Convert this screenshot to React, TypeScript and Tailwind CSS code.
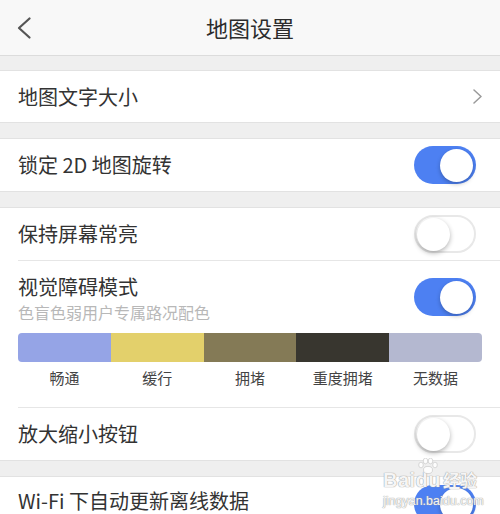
const FONT = "font-['PingFang_SC','Noto_Sans_CJK_SC',sans-serif]"

const legend = [
  { label: '畅通', color: 'bg-[#95a4e6]' },
  { label: '缓行', color: 'bg-[#e3d06b]' },
  { label: '拥堵', color: 'bg-[#847a56]' },
  { label: '重度拥堵', color: 'bg-[#38362f]' },
  { label: '无数据', color: 'bg-[#b4b8d0]' },
]

function Toggle({ on }: { on: boolean }) {
  return on ? (
    <div className="w-[62px] h-[38px] rounded-full bg-[#4d80f2] flex items-center justify-end pr-[3px] shrink-0">
      <div className="w-[33px] h-[33px] rounded-full bg-white shadow-[0_2px_4px_rgba(0,0,0,0.25)]" />
    </div>
  ) : (
    <div className="w-[62px] h-[38px] rounded-full bg-white border-2 border-[#e8e8e8] flex items-center pl-[1px] shrink-0">
      <div className="w-[33px] h-[33px] rounded-full bg-white shadow-[0_2px_5px_rgba(0,0,0,0.3)]" />
    </div>
  )
}

function Row({ title, right }: { title: string; right: React.ReactNode }) {
  return (
    <div className="h-[52px] flex items-center justify-between pl-[18px] pr-[24px]">
      <span className="text-[20px] leading-[24px] text-[#333]">{title}</span>
      {right}
    </div>
  )
}

export default function App() {
  return (
    <div className={`${FONT} relative w-[500px] h-[514px] overflow-hidden bg-[#efefef]`}>
      {/* header */}
      <div className="h-[56px] bg-[#f8f8f8] border-b border-[#dcdcdc] flex items-center">
        <div className="w-[60px] pl-[17px] flex items-center">
          <svg width="14" height="22" viewBox="0 0 14 22" fill="none">
            <polyline points="12.5,1.5 2,11 12.5,20.5" stroke="#555" strokeWidth="2.2" strokeLinecap="round" strokeLinejoin="round" />
          </svg>
        </div>
        <div className="flex-1 text-center text-[22px] leading-[28px] text-[#2c2c2c] -mt-[1px]">地图设置</div>
        <div className="w-[60px]" />
      </div>

      <div className="h-[14px]" />

      <div className="bg-white border-y border-[#e2e2e2] h-[53px] flex items-center justify-between pl-[18px] pr-[18px]">
        <span className="text-[20px] leading-[24px] text-[#333]">地图文字大小</span>
        <svg width="9" height="15" viewBox="0 0 9 15" fill="none">
          <polyline points="1,1 8,7.5 1,14" stroke="#9a9a9a" strokeWidth="1.5" strokeLinecap="round" strokeLinejoin="round" />
        </svg>
      </div>

      <div className="h-[15px]" />

      <div className="bg-white border-y border-[#e2e2e2]">
        <Row title="锁定 2D 地图旋转" right={<Toggle on />} />
      </div>

      <div className="h-[15px]" />

      <div className="bg-white border-y border-[#e2e2e2]">
        <Row title="保持屏幕常亮" right={<Toggle on={false} />} />
        <div className="ml-[18px] border-t border-[#e6e6e6]" />

        <div className="pl-[18px] pr-[18px] pt-[14px] pb-[19px]">
          <div className="flex justify-between pr-[6px]">
            <div>
              <div className="text-[20px] leading-[24px] text-[#333]">视觉障碍模式</div>
              <div className="mt-[2px] text-[16px] leading-[22px] text-[#b8b8b8]">色盲色弱用户专属路况配色</div>
            </div>
            <div className="mt-[3px]">
              <Toggle on />
            </div>
          </div>
          <div className="mt-[10px] h-[29px] flex rounded-[4px] overflow-hidden">
            {legend.map(l => (
              <div key={l.label} className={`flex-1 ${l.color}`} />
            ))}
          </div>
          <div className="mt-[6px] flex">
            {legend.map(l => (
              <div key={l.label} className="flex-1 text-center text-[15px] leading-[20px] text-[#444]">
                {l.label}
              </div>
            ))}
          </div>
        </div>
        <div className="ml-[18px] border-t border-[#e6e6e6]" />

        <Row title="放大缩小按钮" right={<Toggle on={false} />} />
      </div>

      <div className="h-[15px]" />

      <div className="bg-white border-t border-[#e2e2e2]">
        <div className="h-[37px] flex items-start justify-between pl-[18px] pr-[24px] pt-[14px]">
          <span className="text-[20px] leading-[20px] text-[#333]">Wi-Fi 下自动更新离线数据</span>
          <div className="-mt-[6px]">
            <Toggle on />
          </div>
        </div>
      </div>

      {/* watermark */}
      <div className="absolute left-[383px] top-[458px] flex flex-col items-start text-white/90 [text-shadow:0_0_1px_#9a9a9a,0_0_1px_#9a9a9a] font-['Liberation_Sans','Noto_Sans_CJK_SC',sans-serif]">
        <svg className="absolute left-[34px] top-[0px]" width="22" height="16" viewBox="0 0 22 16">
          <g fill="white" stroke="#bdbdbd" strokeWidth="0.6" opacity="0.9">
            <ellipse cx="4" cy="7" rx="2.3" ry="2.8" />
            <ellipse cx="8.5" cy="3" rx="2.3" ry="2.8" />
            <ellipse cx="13.5" cy="3" rx="2.3" ry="2.8" />
            <ellipse cx="18" cy="7" rx="2.3" ry="2.8" />
            <ellipse cx="11" cy="12" rx="4.5" ry="3.6" />
          </g>
        </svg>
        <div className="mt-[12px] flex items-end leading-none">
          <span className="text-[20px] font-bold tracking-[0.5px]">Baidu</span>
          <span className="ml-[2px] text-[17px] font-bold">经验</span>
        </div>
        <div className="mt-[5px] text-[12.5px] leading-none">jingyan.baidu.com</div>
      </div>
    </div>
  )
}
